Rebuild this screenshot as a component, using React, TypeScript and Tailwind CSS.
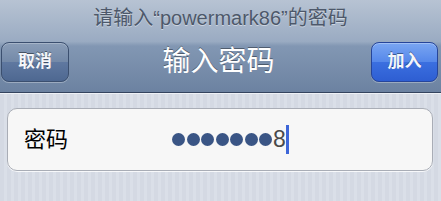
import React from "react";

const font = { fontFamily: '"Liberation Sans","Noto Sans CJK SC",sans-serif' };

export default function App() {
  return (
    <div
      className="w-[441px] h-[201px] overflow-hidden flex flex-col bg-[repeating-linear-gradient(90deg,#d4d9e3_0px,#d4d9e3_4px,#dadfe8_4px,#dadfe8_7px)]"
      style={font}
    >
      <div className="h-[93px] shrink-0 flex flex-col bg-[linear-gradient(180deg,#b7c3d3_0%,#9aabc2_45%,#8297b3_50%,#6c82a1_100%)] border-b border-[#34445f] shadow-[0_1px_0_#eef1f6]">
        <div className="h-[22px] mt-[7px] flex items-center justify-center text-[20px] leading-none text-[#4d586a] [text-shadow:0_1px_0_rgba(255,255,255,0.45)]">
          请输入“powermark86”的密码
        </div>
        <div className="mt-[13px] h-[40px] flex items-center pl-[1px] pr-[3px]">
          <div className="w-[68px] h-[40px] rounded-[8px] border border-[#3b4f6f] bg-[linear-gradient(180deg,#8a9db7_0%,#7389a8_50%,#5f78a0_51%,#4e6891_100%)] shadow-[inset_0_1px_0_rgba(255,255,255,0.25),0_1px_0_rgba(255,255,255,0.3)] flex items-center justify-center text-[#f4f6fa] text-[17px] font-bold [text-shadow:0_-1px_0_rgba(0,0,0,0.45)]">
            取消
          </div>
          <div className="flex-1 text-center text-white text-[28px] leading-none [text-shadow:0_-1px_0_rgba(0,0,0,0.4)] pr-[3px]">
            输入密码
          </div>
          <div className="w-[67px] h-[40px] rounded-[8px] border border-[#26459a] bg-[linear-gradient(180deg,#7aa6f2_0%,#5587ea_50%,#3b6fe0_51%,#2e5ed2_100%)] shadow-[inset_0_1px_0_rgba(255,255,255,0.3),0_1px_0_rgba(255,255,255,0.3)] flex items-center justify-center text-[#f4f6fa] text-[17px] font-bold [text-shadow:0_-1px_0_rgba(0,0,0,0.4)]">
            加入
          </div>
        </div>
      </div>
      <div className="mt-[15px] ml-[7px] mr-[8px] h-[63px] rounded-[10px] border border-[#a9adb6] bg-[#f7f7f7] shadow-[0_1px_0_rgba(255,255,255,0.8)] flex items-center">
        <div className="w-[164px] pl-[16px] text-[22px] text-black leading-none">密码</div>
        <div className="flex items-center">
          <div className="flex gap-[1.5px]">
            {Array.from({ length: 7 }).map((_, i) => (
              <span key={i} className="block w-[13px] h-[13px] rounded-full bg-[#3a5585]" />
            ))}
          </div>
          <span className="text-[23px] leading-none text-[#4a4a4a] ml-[1px]">8</span>
          <span className="block w-[3px] h-[29px] bg-[#3d66d8]" />
        </div>
      </div>
    </div>
  );
}
